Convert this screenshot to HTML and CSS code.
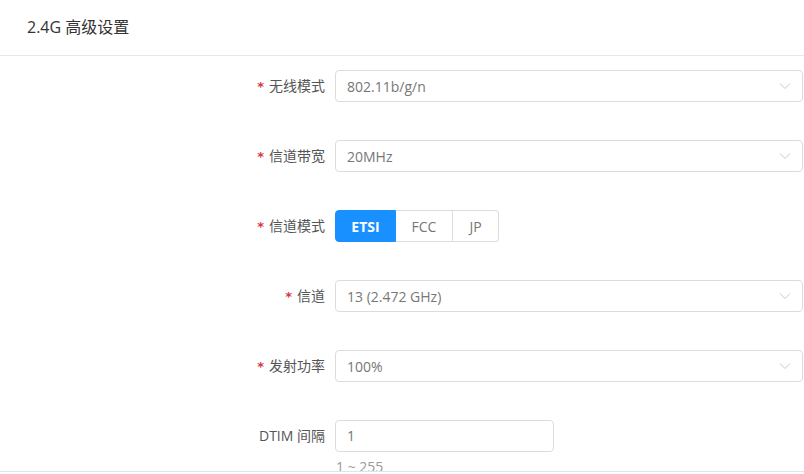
FILE: index.html
```html
<!DOCTYPE html>
<html lang="zh-CN">
<head>
    <meta charset="UTF-8">
    <title>2.4G 高级设置</title>
    <link rel="stylesheet" href="styles.css">
</head>
<body>
    <div class="panel">
        <div class="panel-header">2.4G 高级设置</div>
        <div class="panel-body">
            <div class="form-row">
                <label class="form-label required">无线模式</label>
                <div class="select">
                    <span>802.11b/g/n</span>
                    <svg class="arrow" width="12" height="8" viewBox="0 0 12 8"><path d="M1 1.5 L6 6.5 L11 1.5" fill="none" stroke="#c8c8c8" stroke-width="1"/></svg>
                </div>
            </div>
            <div class="form-row">
                <label class="form-label required">信道带宽</label>
                <div class="select">
                    <span>20MHz</span>
                    <svg class="arrow" width="12" height="8" viewBox="0 0 12 8"><path d="M1 1.5 L6 6.5 L11 1.5" fill="none" stroke="#c8c8c8" stroke-width="1"/></svg>
                </div>
            </div>
            <div class="form-row">
                <label class="form-label required">信道模式</label>
                <div class="radio-group">
                    <button class="radio active">ETSI</button>
                    <button class="radio">FCC</button>
                    <button class="radio">JP</button>
                </div>
            </div>
            <div class="form-row">
                <label class="form-label required">信道</label>
                <div class="select">
                    <span>13 (2.472 GHz)</span>
                    <svg class="arrow" width="12" height="8" viewBox="0 0 12 8"><path d="M1 1.5 L6 6.5 L11 1.5" fill="none" stroke="#c8c8c8" stroke-width="1"/></svg>
                </div>
            </div>
            <div class="form-row">
                <label class="form-label required">发射功率</label>
                <div class="select">
                    <span>100%</span>
                    <svg class="arrow" width="12" height="8" viewBox="0 0 12 8"><path d="M1 1.5 L6 6.5 L11 1.5" fill="none" stroke="#c8c8c8" stroke-width="1"/></svg>
                </div>
            </div>
            <div class="form-row last">
                <label class="form-label">DTIM 间隔</label>
                <div class="field">
                    <div class="input">1</div>
                    <div class="hint">1 ~ 255</div>
                </div>
            </div>
        </div>
    </div>
</body>
</html>
```

FILE: styles.css
```css
body {
    margin: 0;
    background-color: #fff;
    font-family: "Open Sans", "Noto Sans CJK SC", sans-serif;
    color: #333;
}
.panel {
    width: 804px;
}
.panel-header {
    height: 55px;
    line-height: 54px;
    padding-left: 27px;
    font-size: 16px;
    color: #333;
    border-bottom: 1px solid #e8e8e8;
}
.panel-body {
    height: 401px;
    padding-top: 14px;
    overflow: hidden;
    border-bottom: 1px solid #e4e4e4;
}
.form-row {
    display: flex;
    align-items: flex-start;
    height: 32px;
    margin-bottom: 38px;
}
.form-label {
    width: 335px;
    height: 32px;
    padding-right: 10px;
    box-sizing: border-box;
    text-align: right;
    font-size: 14px;
    line-height: 32px;
    color: #555;
}
.form-label.required::before {
    content: "*";
    color: #d9363e;
    margin-right: 5px;
    font-family: "DejaVu Sans", sans-serif;
    font-size: 13px;
    font-weight: bold;
    line-height: 1;
}
.select {
    width: 468px;
    height: 32px;
    box-sizing: border-box;
    border: 1px solid #dcdcdc;
    border-radius: 4px;
    padding: 0 11px;
    display: flex;
    align-items: center;
    justify-content: space-between;
    font-size: 14px;
    color: #777;
}
.radio-group {
    display: flex;
    height: 32px;
}
.radio {
    height: 32px;
    border: 1px solid #dcdcdc;
    border-left: none;
    background-color: #fff;
    color: #777;
    font-family: "Open Sans", sans-serif;
    font-size: 14px;
    padding: 0;
    cursor: pointer;
}
.radio:first-child {
    width: 61px;
    border-left: 1px solid #dcdcdc;
    border-radius: 4px 0 0 4px;
}
.radio:nth-child(2) {
    width: 57px;
}
.radio:last-child {
    width: 46px;
    border-radius: 0 4px 4px 0;
}
.radio.active {
    background-color: #1890ff;
    border-color: #1890ff;
    color: #fff;
    font-weight: bold;
}
.field {
    display: flex;
    flex-direction: column;
}
.input {
    width: 219px;
    height: 32px;
    box-sizing: border-box;
    border: 1px solid #dcdcdc;
    border-radius: 4px;
    padding: 0 11px;
    line-height: 30px;
    font-size: 14px;
    color: #777;
}
.hint {
    margin-top: 5px;
    font-size: 14px;
    color: #999;
    padding-left: 1px;
}
```
